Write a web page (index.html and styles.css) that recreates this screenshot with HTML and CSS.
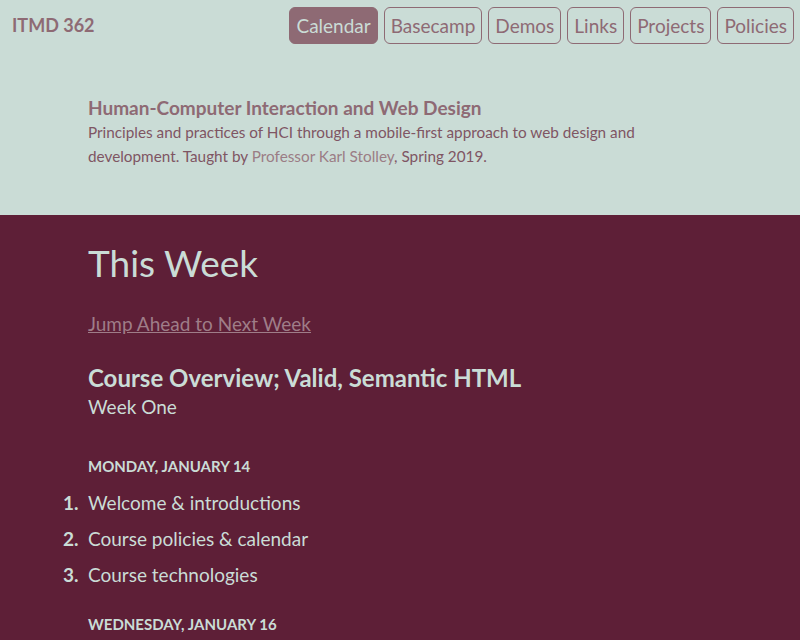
FILE: index.html
```html
<!DOCTYPE html>
<html lang="en">
<head>
<meta charset="utf-8">
<title>ITMD 362</title>
<link rel="stylesheet" href="styles.css">
</head>
<body>
<header class="site-header">
  <div class="topbar">
    <a class="brand" href="#">ITMD 362</a>
    <nav class="nav">
      <a class="nav-item active" href="#">Calendar</a>
      <a class="nav-item" href="#">Basecamp</a>
      <a class="nav-item" href="#">Demos</a>
      <a class="nav-item" href="#">Links</a>
      <a class="nav-item" href="#">Projects</a>
      <a class="nav-item" href="#">Policies</a>
    </nav>
  </div>
  <div class="intro">
    <h1 class="intro-title">Human-Computer Interaction and Web Design</h1>
    <p class="intro-text">Principles and practices of HCI through a mobile-first approach to web design and development. Taught by <a href="#" class="intro-link">Professor Karl Stolley</a>, Spring 2019.</p>
  </div>
</header>
<main class="main">
  <h2 class="week-heading">This Week</h2>
  <p class="jump"><a href="#">Jump Ahead to Next Week</a></p>
  <h3 class="topic">Course Overview; Valid, Semantic HTML</h3>
  <p class="week-name">Week One</p>
  <h4 class="day">Monday, January 14</h4>
  <ol class="items">
    <li>Welcome &amp; introductions</li>
    <li>Course policies &amp; calendar</li>
    <li>Course technologies</li>
  </ol>
  <h4 class="day">Wednesday, January 16</h4>
</main>
</body>
</html>
```
FILE: styles.css
```css
* { box-sizing: border-box; }
html, body { margin: 0; padding: 0; }
body {
  font-family: Lato, "Open Sans", sans-serif;
  background: #5e1f37;
  color: #cadcd6;
}
a { color: inherit; }
.site-header {
  background: #cadcd6;
  color: #8e6a74;
  height: 215px;
}
.topbar {
  display: flex;
  justify-content: space-between;
  align-items: flex-start;
  padding: 7px 6px 0 12px;
}
.brand {
  font-weight: 700;
  font-size: 18px;
  text-decoration: none;
  margin-top: 7px;
}
.nav { display: flex; gap: 6px; }
.nav-item {
  display: block;
  height: 37px;
  line-height: 35px;
  padding: 0 6px;
  border: 1px solid #8e6a74;
  border-radius: 6px;
  font-size: 19px;
  text-decoration: none;
}
.nav-item.active {
  background: #8e6a74;
  color: #cadcd6;
}
.intro { padding: 52px 0 0 88px; max-width: 660px; }
.intro-title {
  margin: 0;
  font-size: 19px;
  line-height: 24px;
  font-weight: 700;
}
.intro-text {
  margin: 0;
  font-size: 15.3px;
  line-height: 24px;
  color: #7f5563;
}
.intro-link { color: #9b7d85; text-decoration: none; }
.main { padding: 22px 0 24px 88px; }
.week-heading {
  margin: 0;
  font-size: 37px;
  font-weight: 400;
  line-height: 52px;
}
.jump {
  margin: 22px 0 0;
  font-size: 19px;
  line-height: 26px;
  color: #9f7d88;
}
.topic {
  margin: 26px 0 0;
  font-size: 24px;
  line-height: 30px;
  font-weight: 700;
}
.week-name { margin: 0; font-size: 19px; line-height: 28px; }
.day {
  margin: 35px 0 0;
  text-transform: uppercase;
  font-size: 15px;
  line-height: 20px;
  font-weight: 700;
}
.items + .day { margin-top: 21px; }
.items {
  margin: 9px 0 0;
  padding: 0;
  font-size: 19px;
  line-height: 36px;
}
.items li::marker {
  font-weight: 700;
  content: counter(list-item) ".\2002";
}
```
